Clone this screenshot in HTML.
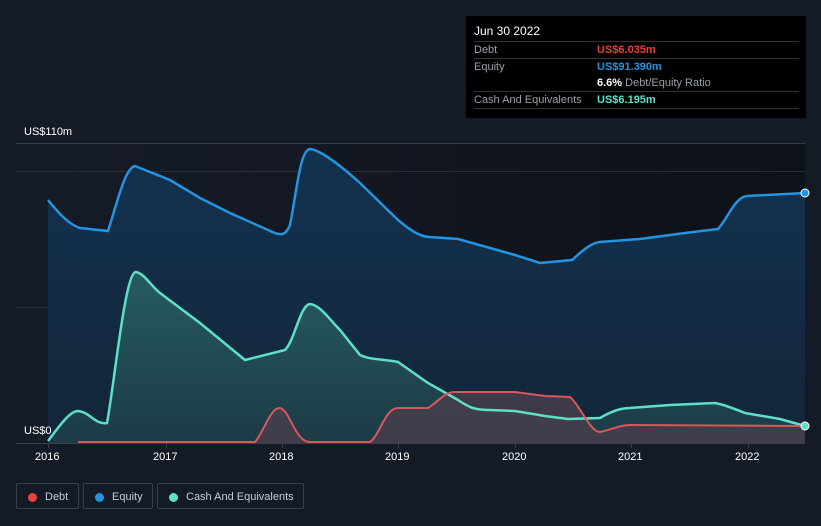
<!DOCTYPE html><html><head><style>
body{margin:0;width:821px;height:526px;background:#151b26;font-family:"Liberation Sans",sans-serif;position:relative;overflow:hidden}
.t{position:absolute;font-size:11px;color:#fff;white-space:nowrap}
.tip{position:absolute;left:466px;top:16px;width:340px;height:102px;background:#000}
.row{position:absolute;left:8px;width:325px;font-size:11px;color:#9aa0a8;border-top:1px solid #333;height:16px;line-height:16px;white-space:nowrap}
.leg{position:absolute;top:483px;height:26px;border:1px solid #3a3f48;border-radius:2px;color:#c8ccd2;font-size:11px;line-height:26px;box-sizing:border-box;white-space:nowrap}
.leg i{position:absolute;left:11px;top:9px;width:9px;height:9px;border-radius:50%}
</style></head><body>
<svg width="821" height="526" style="position:absolute;left:0;top:0">
<defs>
<linearGradient id="bg" x1="0" x2="1" y1="0" y2="0"><stop offset="0" stop-color="#161c27"/><stop offset="1" stop-color="#0d1118"/></linearGradient>
<linearGradient id="eq" x1="0" x2="0" y1="0" y2="1"><stop offset="0" stop-color="#13324f"/><stop offset="1" stop-color="#13263a"/></linearGradient>
<linearGradient id="ca" x1="0" x2="0" y1="0" y2="1"><stop offset="0" stop-color="#2a6466"/><stop offset="1" stop-color="#1d3e48"/></linearGradient>
</defs>
<rect x="16" y="143" width="789" height="300" fill="url(#bg)"/>
<line x1="16" y1="143.5" x2="805" y2="143.5" stroke="#3a3d44"/>
<line x1="16" y1="171.5" x2="805" y2="171.5" stroke="#2a2e35"/>
<line x1="16" y1="307.5" x2="805" y2="307.5" stroke="#22303d"/>
<path d="M48,200 C60,215 70,225 80,228 L108,231 C118,200 125,168 135,166 L170,180 L200,198 L230,213 L268,230 C280,236 285,237 290,225 C297,190 300,150 310,149 C320,150 340,165 360,183 L398,220 C410,230 420,237 430,237 L458,239 L490,248 L515,255 L540,263 L572,260 C580,253 590,243 600,242 L640,239 L685,233 L718,229 C728,218 735,197 747,196 L805,193 L805,443 L48,443Z" fill="url(#eq)"/>
<path d="M48,441 C60,425 70,411 78,411 C90,412 95,425 107,423 C115,380 125,272 136,272 C145,274 150,285 160,293 L200,323 L245,360 L285,350 C295,340 300,305 310,304 C320,305 330,320 340,330 L360,355 C370,360 385,359 398,362 L428,383 L458,400 C470,408 475,410 490,410 L515,411 L545,416 L568,419 L600,418 C610,412 620,408 630,408 L670,405 L715,403 C720,404 725,405 745,413 L780,419 L805,426 L805,443 L48,443Z" fill="url(#ca)" opacity=".85"/>
<path d="M78,442 L255,442 C265,430 270,408 280,408 C290,410 295,442 310,442 L370,442 C380,435 385,408 398,408 L428,408 C440,400 445,392 455,392 L515,392 L545,396 L570,397 C580,405 590,432 600,432 C610,430 620,425 630,425 L805,426 L805,443 L78,443Z" fill="#4a3f4c" opacity=".8"/>
<path d="M48,200 C60,215 70,225 80,228 L108,231 C118,200 125,168 135,166 L170,180 L200,198 L230,213 L268,230 C280,236 285,237 290,225 C297,190 300,150 310,149 C320,150 340,165 360,183 L398,220 C410,230 420,237 430,237 L458,239 L490,248 L515,255 L540,263 L572,260 C580,253 590,243 600,242 L640,239 L685,233 L718,229 C728,218 735,197 747,196 L805,193" fill="none" stroke="#2394e0" stroke-width="2.5"/>
<path d="M48,441 C60,425 70,411 78,411 C90,412 95,425 107,423 C115,380 125,272 136,272 C145,274 150,285 160,293 L200,323 L245,360 L285,350 C295,340 300,305 310,304 C320,305 330,320 340,330 L360,355 C370,360 385,359 398,362 L428,383 L458,400 C470,408 475,410 490,410 L515,411 L545,416 L568,419 L600,418 C610,412 620,408 630,408 L670,405 L715,403 C720,404 725,405 745,413 L780,419 L805,426" fill="none" stroke="#5ee0c8" stroke-width="2.5"/>
<path d="M78,442 L255,442 C265,430 270,408 280,408 C290,410 295,442 310,442 L370,442 C380,435 385,408 398,408 L428,408 C440,400 445,392 455,392 L515,392 L545,396 L570,397 C580,405 590,432 600,432 C610,430 620,425 630,425 L805,426" fill="none" stroke="#d9565a" stroke-width="2"/>
<line x1="16" y1="443.5" x2="805" y2="443.5" stroke="#3a3f48"/>
<g stroke="#3a3f48"><line x1="48.5" y1="443" x2="48.5" y2="448"/><line x1="166.5" y1="443" x2="166.5" y2="448"/><line x1="282.5" y1="443" x2="282.5" y2="448"/><line x1="398.5" y1="443" x2="398.5" y2="448"/><line x1="515.5" y1="443" x2="515.5" y2="448"/><line x1="631.5" y1="443" x2="631.5" y2="448"/><line x1="748.5" y1="443" x2="748.5" y2="448"/></g>
<circle cx="805" cy="193" r="4" fill="#2394e0" stroke="#fff" stroke-width="1"/>
<circle cx="805" cy="426" r="4" fill="#5ee0c8" stroke="#fff" stroke-width="1"/>
</svg>
<div class="t" style="left:24px;top:126px">US$110m</div>
<div class="t" style="left:24px;top:425px">US$0</div>
<div class="t" style="left:35px;top:451px">2016</div>
<div class="t" style="left:153px;top:451px">2017</div>
<div class="t" style="left:269px;top:451px">2018</div>
<div class="t" style="left:385px;top:451px">2019</div>
<div class="t" style="left:502px;top:451px">2020</div>
<div class="t" style="left:618px;top:451px">2021</div>
<div class="t" style="left:735px;top:451px">2022</div>
<div class="tip">
<div class="t" style="left:8px;top:8px;font-size:12px">Jun 30 2022</div>
<div class="row" style="top:25px">Debt<span style="position:absolute;left:123px;color:#e8413e;font-weight:bold">US$6.035m</span></div>
<div class="row" style="top:42px">Equity<span style="position:absolute;left:123px;color:#2394e0;font-weight:bold">US$91.390m</span></div>
<div class="row" style="top:59px;border:none"><span style="position:absolute;left:123px"><b style="color:#fff">6.6%</b> Debt/Equity Ratio</span></div>
<div class="row" style="top:75px;border-bottom:1px solid #333">Cash And Equivalents<span style="position:absolute;left:123px;color:#5ee0c8;font-weight:bold">US$6.195m</span></div>
</div>
<div class="leg" style="left:16px;width:63px"><i style="background:#e8413e"></i><span style="position:absolute;left:28px">Debt</span></div>
<div class="leg" style="left:83px;width:70px"><i style="background:#2394e0"></i><span style="position:absolute;left:28px">Equity</span></div>
<div class="leg" style="left:157px;width:147px"><i style="background:#5ee0c8"></i><span style="position:absolute;left:28px">Cash And Equivalents</span></div>
</body></html>
